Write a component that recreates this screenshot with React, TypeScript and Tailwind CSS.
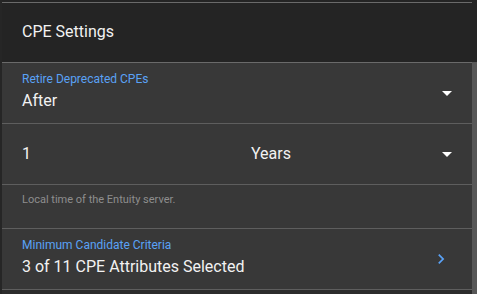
import React from "react";

const ArrowDrop = () => (
  <svg width="24" height="24" viewBox="0 0 24 24" className="shrink-0">
    <path d="M7 10l5 5 5-5z" fill="#ffffff" />
  </svg>
);

const Chevron = () => (
  <svg width="20" height="20" viewBox="0 0 24 24" className="shrink-0">
    <path d="M10 6 8.59 7.41 13.17 12l-4.58 4.59L10 18l6-6z" fill="#5aa2f6" />
  </svg>
);

export default function App() {
  return (
    <div
      className="w-[477px] h-[294px] overflow-hidden flex bg-[#242424]"
      style={{ fontFamily: "Roboto, 'Liberation Sans', sans-serif" }}
    >
      <div className="w-[2px] h-full bg-[#262626]" />
      <div className="w-[470px] flex flex-col">
        <div className="h-[2px] bg-[#242424]" />
        <div className="h-px bg-[#6a6a6a]" />
        <div className="h-[59px] flex items-center pl-[20px] pb-[1px] bg-[#242424]">
          <span className="text-[16px] leading-[24px] text-[#f2f2f2]">CPE Settings</span>
        </div>
        <div className="h-px bg-[#6a6a6a]" />
        <div className="h-[60px] bg-[#383838] flex items-center pl-[20px] pr-[13px]">
          <div className="flex-1 flex flex-col h-full pt-[8px]">
            <span className="text-[12px] leading-[16px] text-[#5aa2f6]">Retire Deprecated CPEs</span>
            <span className="mt-[2px] text-[16px] leading-[24px] text-[#f2f2f2]">After</span>
          </div>
          <ArrowDrop />
        </div>
        <div className="h-px bg-[#5e5e5e]" />
        <div className="h-[60px] bg-[#383838] flex items-center pl-[20px] pr-[13px]">
          <span className="w-[229px] text-[16px] leading-[24px] text-[#f2f2f2]">1</span>
          <span className="flex-1 text-[16px] leading-[24px] text-[#f2f2f2]">Years</span>
          <ArrowDrop />
        </div>
        <div className="h-px bg-[#5e5e5e]" />
        <div className="h-[43px] bg-[#383838] pl-[20px] pt-[7px] text-[11px] leading-[16px] text-[#8e8e8e]">
          Local time of the Entuity server.
        </div>
        <div className="h-px bg-[#5e5e5e]" />
        <div className="h-[60px] bg-[#383838] flex items-center pl-[20px] pr-[21px]">
          <div className="flex-1 flex flex-col h-full pt-[8px]">
            <span className="text-[12px] leading-[16px] text-[#5aa2f6]">Minimum Candidate Criteria</span>
            <span className="mt-[2px] text-[16px] leading-[24px] text-[#f2f2f2]">3 of 11 CPE Attributes Selected</span>
          </div>
          <Chevron />
        </div>
        <div className="h-px bg-[#5e5e5e]" />
        <div className="flex-1 bg-[#2c2c2c]" />
      </div>
      <div className="w-[5px] flex flex-col">
        <div className="h-[62px] bg-[#242424]" />
        <div className="flex-1 bg-[#575757]" />
      </div>
    </div>
  );
}
